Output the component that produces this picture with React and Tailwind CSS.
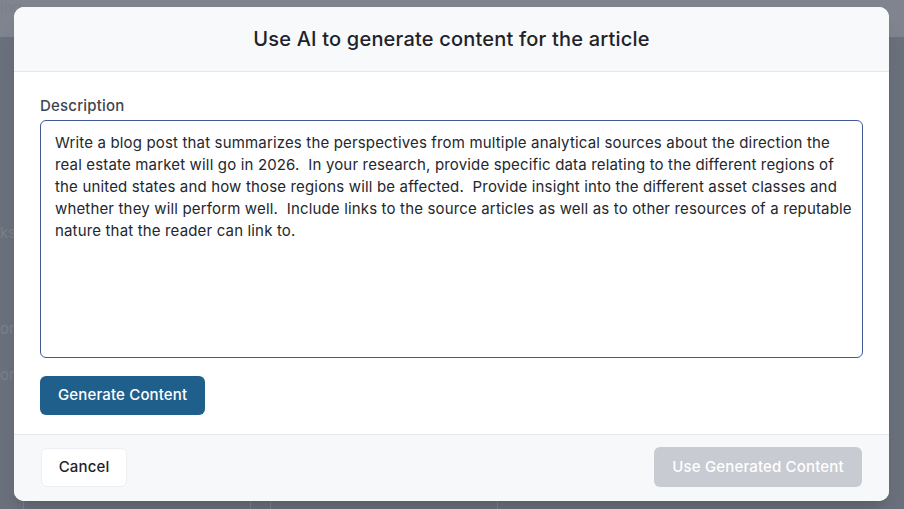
import React, { useState } from 'react';

const PROMPT =
    'Write a blog post that summarizes the perspectives from multiple analytical sources about the direction the real estate market will go in 2026.  In your research, provide specific data relating to the different regions of the united states and how those regions will be affected.  Provide insight into the different asset classes and whether they will perform well.  Include links to the source articles as well as to other resources of a reputable nature that the reader can link to.';

export default function App() {
    const [description, setDescription] = useState(PROMPT);
    const [generated] = useState('');

    return (
        <div className="relative w-[904px] h-[509px] overflow-hidden bg-[#6b717c] font-['Inter',sans-serif]">

            {/* Page behind the dialog (dimmed) */}
            <div className="flex flex-col h-full text-[15px] text-[#7a808a]">
                <div className="h-[37px] bg-[#80848e] leading-[16px]">ing</div>
                <div className="flex-1 flex flex-col items-start pt-[186px]">
                    <span className="leading-5">ks</span>
                    <span className="leading-5 mt-[76px]">or</span>
                    <span className="leading-5 mt-[26px]">on</span>
                </div>
                <div className="h-[8px] flex">
                    <div className="w-[24px] border-r border-[#7c818b]" />
                    <div className="w-[227px] border-r border-[#7c818b]" />
                    <div className="w-[20px] border-r border-[#7c818b]" />
                    <div className="w-[227px] border-r border-[#7c818b]" />
                </div>
            </div>

            {/* Dialog */}
            <div className="absolute left-[14px] top-[7px] w-[875px] h-[494px] flex flex-col bg-white rounded-[10px] overflow-hidden shadow-xl">

                {/* Header */}
                <div className="h-[65px] shrink-0 flex items-center justify-center bg-[#f8f9fa] border-b border-[#e5e7eb]">
                    <h2 className="text-[20px] font-medium text-[#1f2329] tracking-[0.2px]">
                        Use AI to generate content for the article
                    </h2>
                </div>

                {/* Body */}
                <div className="flex-1 flex flex-col px-[26px] pt-[24px] pb-[18px]">
                    <label className="text-[15px] leading-5 font-medium text-[#3f4550] tracking-[0.2px] mb-[4px]">
                        Description
                    </label>
                    <textarea
                        value={description}
                        onChange={e => setDescription(e.target.value)}
                        className="h-[238px] w-full resize-none rounded-[6px] border-[1.5px] border-[#41599b] bg-white pl-[14px] pr-[8px] pt-[11px] text-[15px] leading-[22px] tracking-[0.16px] text-[#23272e] outline-none"
                    />
                    <div className="mt-[18px]">
                        <button className="h-[39px] px-[18px] rounded-[6px] bg-[#1f5f8b] text-[15px] font-medium tracking-[0.15px] text-white">
                            Generate Content
                        </button>
                    </div>
                </div>

                {/* Footer */}
                <div className="h-[67px] shrink-0 flex items-center justify-between px-[27px] pb-[2px] bg-[#f7f8f9] border-t border-[#e5e7eb]">
                    <button className="h-[39px] w-[86px] rounded-[6px] bg-white border border-[#eceef1] text-[15px] font-medium tracking-[0.15px] text-[#1f2329]">
                        Cancel
                    </button>
                    <button
                        disabled={!generated}
                        className="h-[40px] w-[208px] rounded-[6px] bg-[#c8cbd2] text-[15px] font-medium tracking-[0.15px] text-white disabled:cursor-not-allowed"
                    >
                        Use Generated Content
                    </button>
                </div>
            </div>
        </div>
    );
}
